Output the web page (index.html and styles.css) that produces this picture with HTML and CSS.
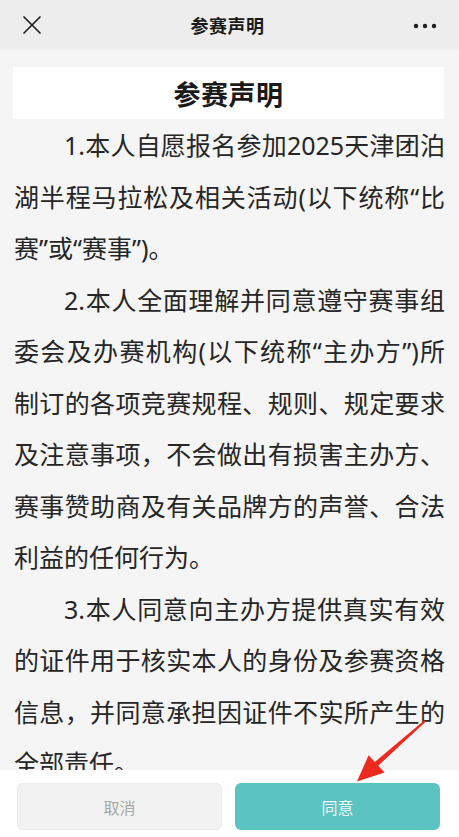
FILE: index.html
```html
<!DOCTYPE html>
<html lang="zh-CN">
<head>
<meta charset="utf-8">
<title>参赛声明</title>
<link rel="stylesheet" href="styles.css">
</head>
<body>
<div class="app">
  <header class="topbar">
    <span class="icon close">
      <svg width="20" height="20" viewBox="0 0 20 20"><path d="M2 2 L18 18 M18 2 L2 18" stroke="#1f1f1f" stroke-width="1.7" fill="none" stroke-linecap="round"/></svg>
    </span>
    <h1 class="bar-title">参赛声明</h1>
    <span class="icon more">
      <svg width="24" height="6" viewBox="0 0 24 6"><circle cx="3" cy="3" r="2.2" fill="#1f1f1f"/><circle cx="12" cy="3" r="2.2" fill="#1f1f1f"/><circle cx="21" cy="3" r="2.2" fill="#1f1f1f"/></svg>
    </span>
  </header>
  <main class="content">
    <div class="doc-title">参赛声明</div>
    <p class="para">1.本人自愿报名参加2025天津团泊湖半程马拉松及相关活动(以下统称“比赛”或“赛事”)。</p>
    <p class="para">2.本人全面理解并同意遵守赛事组委会及办赛机构(以下统称“主办方”)所制订的各项竞赛规程、规则、规定要求及注意事项，不会做出有损害主办方、赛事赞助商及有关品牌方的声誉、合法利益的任何行为。</p>
    <p class="para">3.本人同意向主办方提供真实有效的证件用于核实本人的身份及参赛资格信息，并同意承担因证件不实所产生的全部责任。</p>
  </main>
  <footer class="actions">
    <button class="btn btn-cancel">取消</button>
    <button class="btn btn-agree">同意</button>
  </footer>
</div>
<svg class="annotation" width="459" height="837" viewBox="0 0 459 837">
  <polygon points="424.4,720.3 374.8,761.9 368.6,755.2 357,781.5 384.6,772.6 378.2,765.7 425.6,721.7" fill="#ee2a1f"/>
</svg>
</body>
</html>
```
FILE: styles.css
```css
* { box-sizing: border-box; }
html, body { margin: 0; padding: 0; }
body {
  width: 459px;
  height: 837px;
  overflow: hidden;
  position: relative;
  font-family: "Noto Sans CJK SC", "Noto Sans", sans-serif;
  color: #222;
  background: #f5f5f5;
}
.app {
  display: flex;
  flex-direction: column;
  height: 837px;
}
.topbar {
  height: 50px;
  flex: none;
  background: #ededed;
  display: flex;
  align-items: center;
  justify-content: space-between;
  padding: 0 22px 0 22px;
}
.icon { display: flex; align-items: center; }
.more { margin-top: 2px; }
.bar-title {
  margin: 0;
  font-size: 18px;
  font-weight: 700;
  color: #1a1a1a;
  letter-spacing: 0.5px;
}
.content {
  flex: 1;
  overflow: hidden;
  background: #f5f5f5;
  padding: 17px 14px 0 14px;
}
.doc-title {
  height: 52px;
  margin: 0 1px 0 -1px;
  background: #fff;
  display: flex;
  align-items: center;
  justify-content: center;
  font-size: 27px;
  font-weight: 700;
  color: #1a1a1a;
  letter-spacing: 0.5px;
}
.para {
  margin: 1px 0 0 0;
  font-family: "Noto Sans", "Noto Sans CJK SC", sans-serif;
  font-size: 25px;
  line-height: 51.5px;
  text-indent: 2em;
  text-align: justify;
  color: #262626;
}
.para + .para { margin-top: 0; }
.actions {
  flex: none;
  height: 67px;
  background: #fff;
  display: flex;
  gap: 13px;
  padding: 13px 19px 7px 17px;
}
.btn {
  flex: 1;
  border: none;
  border-radius: 6px;
  font-family: inherit;
  font-size: 16px;
}
.btn-cancel {
  background: #f2f2f2;
  color: #a8a8a8;
  box-shadow: inset 0 0 0 1px #ececec;
}
.btn-agree {
  background: #5bc4c1;
  color: #eef9f8;
}
.annotation {
  position: absolute;
  left: 0;
  top: 0;
  pointer-events: none;
}
```
